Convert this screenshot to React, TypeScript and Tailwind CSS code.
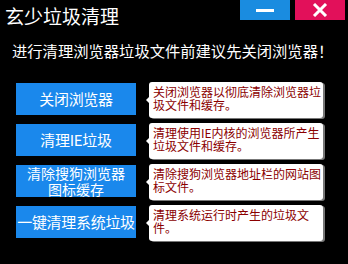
import React from 'react';

const items = [
  { label: ['关闭浏览器'], tip: '关闭浏览器以彻底清除浏览器垃圾文件和缓存。' },
  { label: ['清理IE垃圾'], tip: '清理使用IE内核的浏览器所产生垃圾文件和缓存。' },
  { label: ['清除搜狗浏览器', '图标缓存'], tip: '清除搜狗浏览器地址栏的网站图标文件。' },
  { label: ['一键清理系统垃圾'], tip: '清理系统运行时产生的垃圾文件。' },
];

const App: React.FC = () => {
  return (
    <div
      className="w-[348px] h-[264px] bg-black text-white overflow-hidden"
      style={{ fontFamily: '"Microsoft YaHei", "Noto Sans CJK SC", sans-serif' }}
    >
      <div className="flex justify-between h-[40px]">
        <div className="pl-[5px] pt-[5px] text-[19px] leading-[22px]">玄少垃圾清理</div>
        <div className="flex gap-[5px] pr-[3px]">
          <button className="w-[50px] h-[20px] bg-[#1a8ce0] flex items-center justify-center">
            <span className="block w-[18px] h-[3px] bg-white" />
          </button>
          <button className="w-[50px] h-[20px] bg-[#e2105a] flex items-center justify-center">
            <svg width="16" height="14" viewBox="0 0 16 14">
              <path d="M2 1 L14 13 M14 1 L2 13" stroke="white" strokeWidth="3" />
            </svg>
          </button>
        </div>
      </div>
      <div className="pl-[12px] text-[15.3px] leading-[20px] whitespace-nowrap">
        进行清理浏览器垃圾文件前建议先关闭浏览器！
      </div>
      <div className="flex flex-col gap-[5px] mt-[22px] pl-[16px]">
        {items.map((it, i) => (
          <div key={i} className="flex items-start h-[36px]">
            <button className="mt-[1px] w-[120px] h-[32px] bg-[#1a88ec] text-white flex flex-col items-center justify-center whitespace-nowrap">
              {it.label.map((l, j) => (
                <span
                  key={j}
                  className={it.label.length > 1 ? 'text-[14px] leading-[16px]' : 'text-[15px] leading-[18px] tracking-[-0.3px]'}
                >
                  {l}
                </span>
              ))}
            </button>
            <div className="relative ml-[13px] w-[174px] h-[36px] bg-white rounded-[3px] shadow-[2px_1px_0_#777] pl-[4px] pr-[1px] pt-[3px] text-[#8b0000] text-[12px] leading-[13px] break-all">
              <span className="absolute left-[-3px] top-[15px] w-0 h-0 border-y-[3px] border-y-transparent border-r-[3px] border-r-white" />
              {it.tip}
            </div>
          </div>
        ))}
      </div>
    </div>
  );
};

export default App;
